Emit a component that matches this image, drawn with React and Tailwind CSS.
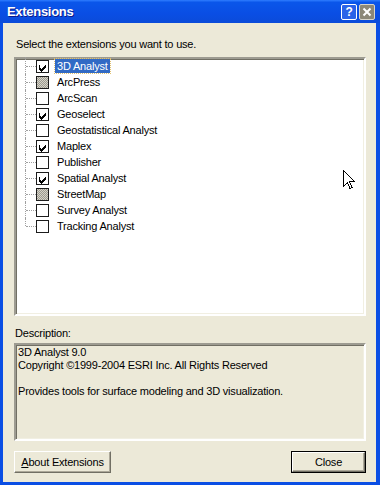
import React from "react";

const items = [
  { name: "3D Analyst", state: "checked", selected: true },
  { name: "ArcPress", state: "gray" },
  { name: "ArcScan", state: "off" },
  { name: "Geoselect", state: "checked" },
  { name: "Geostatistical Analyst", state: "off" },
  { name: "Maplex", state: "checked" },
  { name: "Publisher", state: "off" },
  { name: "Spatial Analyst", state: "checked" },
  { name: "StreetMap", state: "gray" },
  { name: "Survey Analyst", state: "off" },
  { name: "Tracking Analyst", state: "off" },
];

function Check({ state }) {
  if (state === "gray") {
    return (
      <div className="w-[13px] h-[13px] border border-[#1c1c1c] bg-[image:repeating-conic-gradient(#9c9a90_0_25%,#d6d3c8_0_50%)] bg-[length:2px_2px] shrink-0" />
    );
  }
  return (
    <div className="w-[13px] h-[13px] border border-[#1c1c1c] bg-white shrink-0 flex items-center justify-center">
      {state === "checked" && (
        <svg width="11" height="11" viewBox="0 0 11 11" shapeRendering="crispEdges">
          <path d="M2 4h1v3h1v1h1v-1h1v-1h1v-1h1v-1h1v3h-1v1h-1v1h-1v1h-1v1h-1v-1h-1v-1h-1z" fill="#000" />
        </svg>
      )}
    </div>
  );
}

function Row({ item, first, last }) {
  return (
    <div className="flex items-center h-[16px]">
      <div className="w-[9px] shrink-0" />
      <div className="relative w-[11px] h-[16px] shrink-0">
        <div
          className={
            "absolute left-0 w-0 border-l border-dotted border-[#a0a0a0] " +
            (first ? "top-[-1px] " : "top-0 ") +
            (last ? "h-[8px]" : "bottom-0")
          }
        />
        <div className="absolute left-[1px] top-[8px] w-[10px] h-0 border-t border-dotted border-[#a0a0a0]" />
      </div>
      <Check state={item.state} />
      <div className="w-[6px] shrink-0" />
      <div
        className={
          "px-[2px] leading-[14px] h-[14px] whitespace-nowrap " +
          (item.selected ? "bg-[#316AC5] text-white outline outline-1 outline-dotted outline-[#e0c070]" : "text-black")
        }
      >
        {item.name}
      </div>
    </div>
  );
}

const sunken =
  "border-2 border-t-[#9d9b91] border-l-[#9d9b91] border-b-white border-r-white shadow-[inset_1px_1px_0_#716f64,inset_-1px_-1px_0_#f1efe2]";

export default function App() {
  return (
    <div className="relative w-[380px] h-[485px] bg-[#0a4ee4] flex flex-col font-['Liberation_Sans',Arial,sans-serif] text-[11px] tracking-[-0.2px] text-black overflow-hidden">
      {/* Title bar */}
      <div className="h-[23px] shrink-0 flex items-center pl-[7px] pr-[5px] bg-[linear-gradient(to_bottom,#2f7dff_0%,#0a56ea_10%,#0a4ee4_60%,#0b4bd9_100%)]">
        <div className="text-white font-bold text-[13px] tracking-[-0.3px] [text-shadow:1px_1px_0_#0a1a8a]">
          Extensions
        </div>
        <div className="flex-1" />
        <div className="w-[16px] h-[16px] rounded-[2px] border border-white bg-[#2a63e8] flex items-center justify-center text-white font-bold text-[12px] leading-none">
          ?
        </div>
        <div className="w-[2px]" />
        <div className="w-[16px] h-[16px] rounded-[2px] border border-[#d8d4c8] bg-[#8c8878] flex items-center justify-center">
          <svg width="10" height="10" viewBox="0 0 10 10">
            <path d="M1.5 1.5L8.5 8.5M8.5 1.5L1.5 8.5" stroke="#fff" strokeWidth="2" />
          </svg>
        </div>
      </div>

      {/* Client */}
      <div className="flex-1 ml-[3px] mr-[4px] mb-[3px] bg-[#ECE9D8] flex flex-col pl-[11px] pr-[10px] pt-[15px]">
        <div className="h-[13px] leading-[13px] pl-[2px]">Select the extensions you want to use.</div>
        <div className={"mt-[6px] h-[259px] bg-white " + sunken}>
          <div className="-mt-[1px]">
            {items.map((it, i) => (
              <Row key={it.name} item={it} first={i === 0} last={i === items.length - 1} />
            ))}
          </div>
        </div>
        <div className="mt-[11px] h-[13px] leading-[13px] pl-[1px]">Description:</div>
        <div className={"mt-[3px] h-[98px] pl-[2px] pt-[1px] leading-[13px] " + sunken}>
          <div>3D Analyst 9.0</div>
          <div>Copyright ©1999-2004 ESRI Inc. All Rights Reserved</div>
          <div>&nbsp;</div>
          <div>Provides tools for surface modeling and 3D visualization.</div>
        </div>
        <div className="mt-[10px] flex justify-between">
          <button className="w-[97px] h-[22px] bg-[#ECE9D8] border border-t-white border-l-white border-b-[#716f64] border-r-[#716f64] shadow-[inset_-1px_-1px_0_#aca899] flex items-center justify-center">
            <span>
              <span className="underline">A</span>bout Extensions
            </span>
          </button>
          <button className="w-[75px] h-[22px] border border-black bg-[#ECE9D8] flex">
            <div className="flex-1 border border-t-white border-l-white border-b-[#716f64] border-r-[#716f64] shadow-[inset_-1px_-1px_0_#aca899] flex items-center justify-center">
              Close
            </div>
          </button>
        </div>
      </div>

      {/* Mouse cursor */}
      <svg className="absolute left-[343px] top-[170px]" width="12" height="20" viewBox="0 0 12 20" shapeRendering="crispEdges">
        <path
          d="M0.5 0.5 L0.5 16.5 L4.5 12.5 L7 18.5 L9 17.5 L6.5 11.5 L11.5 11.5 Z"
          fill="#fff"
          stroke="#000"
          strokeWidth="1"
        />
      </svg>
    </div>
  );
}
